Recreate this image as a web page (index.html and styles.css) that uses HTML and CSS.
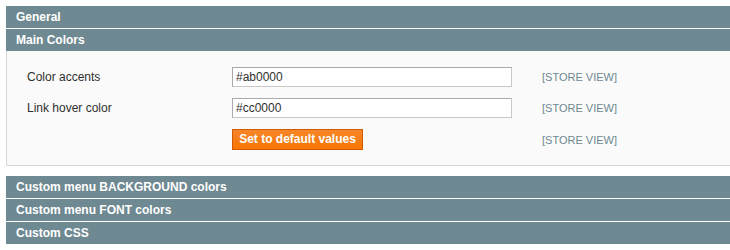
FILE: index.html
```html
<!DOCTYPE html>
<html>
<head>
<meta charset="utf-8">
<link rel="stylesheet" href="styles.css">
</head>
<body>
<div class="page">
  <div class="section-head">General</div>
  <div class="section-head">Main Colors</div>
  <div class="fieldset">
    <div class="form-grid">
      <label class="label">Color accents</label>
      <input class="input-text" type="text" value="#ab0000">
      <span class="scope">[STORE VIEW]</span>

      <label class="label">Link hover color</label>
      <input class="input-text" type="text" value="#cc0000">
      <span class="scope">[STORE VIEW]</span>

      <span class="label"></span>
      <div class="btn-cell"><button class="btn" type="button">Set to default values</button></div>
      <span class="scope">[STORE VIEW]</span>
    </div>
  </div>
  <div class="section-head">Custom menu BACKGROUND colors</div>
  <div class="section-head">Custom menu FONT colors</div>
  <div class="section-head">Custom CSS</div>
</div>
</body>
</html>
```
FILE: styles.css
```css
html, body {
  margin: 0;
  padding: 0;
  background: #ffffff;
  overflow: hidden;
}
body {
  font-family: "Liberation Sans", Arial, Helvetica, sans-serif;
  font-size: 12px;
  color: #2f2f2f;
}
.page {
  padding: 6px 0 0 6px;
  width: 760px;
}
.section-head {
  height: 22px;
  line-height: 22px;
  background: #6f8992;
  color: #ffffff;
  font-weight: bold;
  font-size: 12px;
  padding-left: 10px;
  margin-bottom: 1px;
}
.section-head + .fieldset {
  margin-top: -1px;
}
.fieldset {
  border: 1px solid #d6d6d6;
  border-top: 0;
  background: #fafafa;
  padding: 16px 20px 15px 20px;
  margin-bottom: 10px;
}
.form-grid {
  display: grid;
  grid-template-columns: 205px 280px auto;
  row-gap: 11px;
  align-items: center;
}
.label {
  font-size: 12px;
  color: #2f2f2f;
}
.input-text {
  box-sizing: border-box;
  width: 280px;
  height: 20px;
  margin: 0;
  padding: 0 3px;
  border: 1px solid #aaaaaa;
  border-color: #aaaaaa #c8c8c8 #c8c8c8 #aaaaaa;
  background: #ffffff;
  font-family: "Liberation Sans", Arial, Helvetica, sans-serif;
  font-size: 12px;
  color: #2f2f2f;
}
.scope {
  padding-left: 30px;
  font-size: 11px;
  color: #6f8992;
}
.btn-cell {
  display: flex;
}
.btn {
  box-sizing: border-box;
  height: 21px;
  width: 131px;
  margin: 0;
  padding: 0 0 1px 0;
  border: 1px solid #d05a00;
  background: linear-gradient(#f8862a, #f47c12 60%, #ff7700);
  color: #ffffff;
  font-family: "Liberation Sans", Arial, Helvetica, sans-serif;
  font-weight: bold;
  font-size: 12px;
  cursor: pointer;
}
```
